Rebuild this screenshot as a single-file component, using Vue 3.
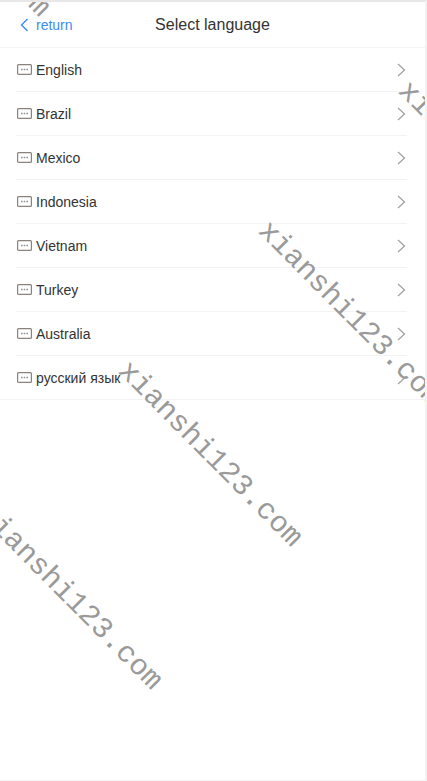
<script setup>
const languages = ['English', 'Brazil', 'Mexico', 'Indonesia', 'Vietnam', 'Turkey', 'Australia', 'русский язык']
const marks = [
  { left: -129, top: -164 },
  { left: 123, top: 366 },
  { left: 263, top: 226 },
  { left: 403, top: 86 },
  { left: -17, top: 509 }
]
</script>

<template>
  <div class="page">
    <header class="nav">
      <div class="back">
        <svg class="back-icon" width="9" height="14" viewBox="0 0 9 14"><path d="M7.5 1 1.5 7l6 6" fill="none" stroke="currentColor" stroke-width="1.4" /></svg>
        <span>return</span>
      </div>
      <h1 class="title">Select language</h1>
    </header>
    <ul class="list">
      <li v-for="name in languages" :key="name" class="row">
        <div class="row-inner">
          <svg class="flag" width="15" height="11" viewBox="0 0 15 11">
            <rect x=".6" y=".6" width="13.8" height="9.8" rx="1" fill="#fff" stroke="#8a827c" stroke-width="1.2" />
            <path d="M4 5.5h1.6M6.7 5.5h1.6M9.4 5.5H11" stroke="#8f8f98" stroke-width="1.3" />
          </svg>
          <span class="name">{{ name }}</span>
          <svg class="arrow" width="9" height="14" viewBox="0 0 9 14"><path d="M1 1l6.5 6L1 13" fill="none" stroke="#a3a3a3" stroke-width="1.3" /></svg>
        </div>
      </li>
    </ul>
    <div class="marks">
      <span v-for="(m, i) in marks" :key="i" class="mark" :style="{ left: m.left + 'px', top: m.top + 'px' }">xianshi123.com</span>
    </div>
  </div>
</template>

<style>
html, body { margin: 0; background: #fff; overflow: hidden; }
</style>

<style scoped>
.page {
  position: relative;
  box-sizing: border-box;
  width: 427px;
  height: 781px;
  overflow: hidden;
  background: #fff;
  border-top: 2px solid #e8e8e8;
  border-right: 2px solid #f3f3f3;
  border-bottom: 1px solid #f3f3f3;
  font-family: "Liberation Sans", Arial, sans-serif;
  color: #333;
}
.nav {
  position: relative;
  box-sizing: border-box;
  height: 46px;
  display: flex;
  align-items: center;
  justify-content: center;
  border-bottom: 1px solid #f3f3f3;
}
.back {
  position: absolute;
  left: 20px;
  top: 0;
  height: 45px;
  display: flex;
  align-items: center;
  gap: 7px;
  font-size: 14px;
  color: #3b8cf5;
}
.back-icon { display: block; }
.title {
  margin: 0;
  font-size: 16px;
  font-weight: 400;
  color: #333;
}
.list {
  margin: 0;
  padding: 0;
  list-style: none;
  border-bottom: 1px solid #f3f3f3;
}
.row { padding: 0 18px 0 16px; }
.row-inner {
  box-sizing: border-box;
  height: 44px;
  display: flex;
  align-items: center;
  border-bottom: 1px solid #f3f3f3;
  padding-right: 1px;
}
.row:last-child .row-inner { border-bottom: 0; height: 43px; }
.flag { display: block; margin-left: 1px; margin-right: 4px; }
.name { flex: 1; font-size: 14px; color: #333; }
.arrow { display: block; margin-top: 1px; }
.marks { position: absolute; inset: -2px 0 0 0; pointer-events: none; }
.mark {
  position: absolute;
  transform-origin: 0 50%;
  transform: rotate(45.3deg);
  white-space: nowrap;
  font-family: "Liberation Mono", monospace;
  font-size: 29.5px;
  line-height: 30px;
  color: #9a9a9a;
  margin-top: -15px;
}
</style>
